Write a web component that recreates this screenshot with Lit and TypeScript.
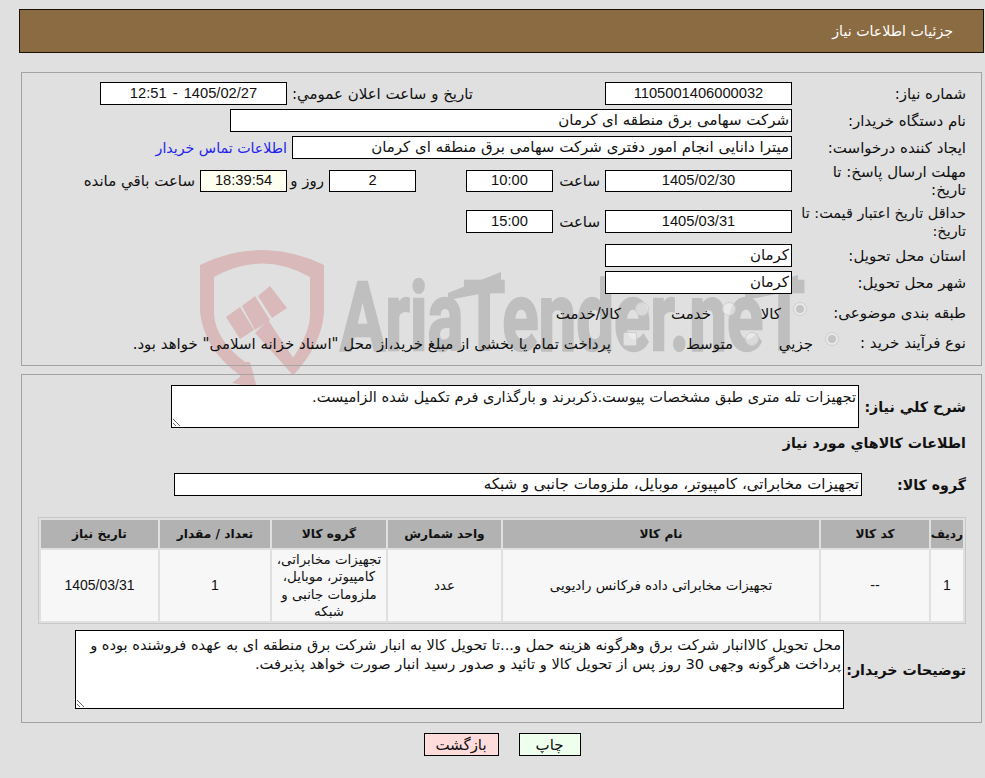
import { LitElement, html, css, svg } from "lit";
import { customElement } from "lit/decorators.js";

const watermark = svg`
<svg class="wm" width="985" height="420" viewBox="0 0 985 420" xmlns="http://www.w3.org/2000/svg">
  <g fill="#d9b9b9">
    <path d="M232 383 L241 376 Q204 350 200 312 L200 265 Q262 235 324 265 L324 312 Q322 345 293 375 L285 366 L293 358 Q310 332 310 315 L310 277 Q262 250 214 277 L214 315 Q216 340 245 362 L250 362 L257 388 Z"/>
    <polygon points="255,333 268,320 300,368 293,375"/>
    <polygon points="226,317 240,307 254,330 240,339"/>
    <polygon points="242,306 255,296 270,320 255,330"/>
    <polygon points="258,296 270,286 287,308 272,318"/>
  </g>
  <text x="340" y="350" font-family="Roboto, sans-serif" font-weight="700" font-size="97" fill="#bfbfbf" stroke="#bfbfbf" stroke-width="2.5" textLength="465" lengthAdjust="spacingAndGlyphs">AriaTender.neT</text>
  <polygon fill="#bfbfbf" points="448,293 501,272 501,290 448,300"/>
  <polygon fill="#bfbfbf" points="745,291 798,275 798,290 745,300"/>
</svg>`;

@customElement("app-root")
export class AppRoot extends LitElement {
  static styles = css`
    :host {
      display: block;
      position: relative;
      min-height: 778px;
      background: #e0e0e0;
      font-family: "DejaVu Sans", sans-serif;
      font-size: 15px;
      line-height: 18px;
      color: #111;
      overflow: hidden;
    }
    .wm { position: absolute; left: 0; top: 0; pointer-events: none; }
    .page { position: relative; padding: 9px 1px 23px 19px; box-sizing: border-box; }
    .header {
      height: 44px;
      box-sizing: border-box;
      background: #8b6b42;
      border: 1px solid #1a1208;
      color: #fff;
      display: flex;
      align-items: center;
      padding: 0 30px;
      font-size: 14.2px;
      margin-bottom: 19px;
    }
    .section {
      border: 1px solid #a3a3a3;
      margin: 0 2px 8px 2px;
      padding-right: 15px;
      box-sizing: border-box;
    }
    .s1 { height: 294px; padding-top: 9px; display: flex; flex-direction: column; }
    .s2 { height: 349px; padding-top: 10px; padding-left: 16px; margin-bottom: 10px; display: flex; flex-direction: column; }
    .row { display: flex; align-items: center; }
    .r { height: 23px; margin-bottom: 4px; }
    .r4 { height: 36px; margin-bottom: 4px; }
    .r5 { height: 37px; margin-bottom: 4px; }
    .rr { height: 27px; margin-bottom: 3px; }
    .label { width: 174px; flex: none; line-height: 18px; white-space: nowrap; }
    .small { font-size: 14.4px; }
    .lab-radio1 { width: 159px; margin-top: 2px; }
    .lab-radio2 { width: 127px; margin-top: 2px; }
    .box {
      box-sizing: border-box;
      height: 23px;
      border: 1px solid #000;
      background: #fff;
      flex: none;
      padding: 0 2px;
      white-space: nowrap;
      line-height: 20px;
      overflow: hidden;
    }
    .h22 { height: 22px; line-height: 19px; }
    .num { text-align: center; font-family: "Liberation Sans", sans-serif; font-size: 14.7px; }
    .spaced { word-spacing: 2px; }
    .w187 { width: 187px; }
    .w87 { width: 87px; }
    .warm { background: #fffff0; }
    .t1 { margin-right: 132px; width: 180px; margin-left: 6px; flex: none; white-space: nowrap; }
    .long2 { width: 562px; }
    .long3 { width: 500px; margin-left: 5px; }
    .link { color: #2222ee; white-space: nowrap; font-size: 14.2px; }
    .hour { margin: 0 5px; width: 42px; flex: none; white-space: nowrap; }
    .day { margin: 0 5px 0 9px; white-space: nowrap; width: 28px; flex: none; }
    .left { margin-right: 5px; white-space: nowrap; }
    .gap50 { margin-right: 50px; }
    .radio {
      box-sizing: border-box;
      width: 14px;
      height: 14px;
      border-radius: 50%;
      border: 1px solid #cdcdcd;
      background: rgba(240, 240, 240, 0.55);
      flex: none;
      display: flex;
      align-items: center;
      justify-content: center;
      margin-top: -5px;
    }
    .radio.on::after { content: ""; width: 8px; height: 8px; border-radius: 50%; background: #c4c4c4; }
    .check {
      box-sizing: border-box;
      width: 14px;
      height: 14px;
      border-radius: 2px;
      border: 1px solid #cdcdcd;
      background: rgba(240, 240, 240, 0.7);
      flex: none;
      margin-top: -5px;
    }
    .opt { white-space: nowrap; margin-right: 12px; flex: none; margin-top: 4px; }
    .o-a { width: 45px; }
    .o-b { width: 62px; margin-right: 11px; }
    .o-c { margin-right: 14px; }
    .o-d { width: 54px; }
    .o-e { width: 96px; }
    .bold { font-weight: 700; font-size: 14.2px; }
    textarea {
      box-sizing: border-box;
      border: 1px solid #000;
      border-radius: 0;
      background: #fff;
      font: 14.6px/18px "DejaVu Sans", sans-serif;
      color: #111;
      padding: 2px 2px 0;
      margin: 0;
      outline: none;
      display: block;
      flex: none;
    }
    .ta1 { width: 688px; height: 43px; }
    .ta2 { width: 769px; height: 79px; padding-top: 4px; line-height: 19px; }
    .heading { height: 18px; margin-top: 6px; margin-bottom: 21px; }
    .group { width: 688px; }
    table {
      width: 928px;
      table-layout: fixed;
      border: 1px solid #c8c8c8;
      border-collapse: separate;
      border-spacing: 2px;
      margin-top: 21px;
      margin-bottom: 6px;
      flex: none;
    }
    th, td { padding: 0; text-align: center; }
    th { background: #b2b2b2; height: 28px; font-weight: 700; font-size: 12.2px; white-space: nowrap; }
    td { background: #f7f7f7; height: 71px; line-height: 17.3px; font-size: 13.4px; }
    td.num { font-size: 14px; }
    td.wrap { padding: 0 3px; }
    .c1 { width: 32px; }
    .c2 { width: 108px; }
    .c3 { width: 316px; }
    .c4 { width: 113px; }
    .c5 { width: 114px; }
    .c6 { width: 110px; }
    .buttons { display: flex; justify-content: center; gap: 20px; margin-right: -19px; transform: translateX(-9px); }
    .btn { box-sizing: border-box; height: 23px; border: 1px solid #000; display: flex; align-items: center; justify-content: center; }
    .print { width: 62px; background: #eeffee; }
    .back { width: 75px; background: #ffdcdc; }
  `;

  render() {
    return html`
      ${watermark}
      <div class="page" dir="rtl">
        <div class="header">جزئيات اطلاعات نياز</div>

        <div class="section s1">
          <div class="row r">
            <div class="label">شماره نياز:</div>
            <div class="box num w187">1105001406000032</div>
            <div class="t1">تاريخ و ساعت اعلان عمومي:</div>
            <div class="box num w187 spaced">1405/02/27 - 12:51</div>
          </div>
          <div class="row r">
            <div class="label">نام دستگاه خريدار:</div>
            <div class="box long2">شرکت سهامی برق منطقه ای کرمان</div>
          </div>
          <div class="row r">
            <div class="label">ايجاد کننده درخواست:</div>
            <div class="box long3">ميترا دانايی انجام امور دفتری شرکت سهامی برق منطقه ای کرمان</div>
            <div class="link">اطلاعات تماس خريدار</div>
          </div>
          <div class="row r4">
            <div class="label">مهلت ارسال پاسخ: تا<br />تاريخ:</div>
            <div class="box num w187 h22">1405/02/30</div>
            <div class="hour">ساعت</div>
            <div class="box num w87 h22">10:00</div>
            <div class="box num w87 h22 gap50">2</div>
            <div class="day">روز و</div>
            <div class="box num w87 h22 warm">18:39:54</div>
            <div class="left">ساعت باقي مانده</div>
          </div>
          <div class="row r5">
            <div class="label small">حداقل تاريخ اعتبار قيمت: تا<br />تاريخ:</div>
            <div class="box num w187">1405/03/31</div>
            <div class="hour">ساعت</div>
            <div class="box num w87">15:00</div>
          </div>
          <div class="row r">
            <div class="label">استان محل تحويل:</div>
            <div class="box w187">کرمان</div>
          </div>
          <div class="row r">
            <div class="label">شهر محل تحويل:</div>
            <div class="box w187">کرمان</div>
          </div>
          <div class="row rr">
            <div class="label lab-radio1">طبقه بندی موضوعی:</div>
            <span class="radio on"></span>
            <span class="opt o-a">کالا</span>
            <span class="radio"></span>
            <span class="opt o-b">خدمت</span>
            <span class="radio"></span>
            <span class="opt o-c">کالا/خدمت</span>
          </div>
          <div class="row rr">
            <div class="label lab-radio2">نوع فرآيند خريد :</div>
            <span class="radio on"></span>
            <span class="opt o-d">جزيي</span>
            <span class="radio"></span>
            <span class="opt o-e">متوسط</span>
            <span class="check"></span>
            <span class="opt">پرداخت تمام يا بخشی از مبلغ خريد،از محل "اسناد خزانه اسلامی" خواهد بود.</span>
          </div>
        </div>

        <div class="section s2">
          <div class="row">
            <div class="label bold" style="width:107px">شرح كلي نياز:</div>
            <textarea class="ta1" readonly>تجهيزات تله متری طبق مشخصات پيوست.ذکربرند و بارگذاری فرم تکميل شده الزاميست.</textarea>
          </div>
          <div class="bold heading">اطلاعات كالاهاي مورد نياز</div>
          <div class="row">
            <div class="label bold" style="width:104px">گروه كالا:</div>
            <div class="box group">تجهيزات مخابراتی، کامپيوتر، موبايل، ملزومات جانبی و شبکه</div>
          </div>
          <table>
            <colgroup>
              <col class="c1" /><col class="c2" /><col class="c3" /><col class="c4" /><col class="c5" /><col class="c6" /><col />
            </colgroup>
            <thead>
              <tr>
                <th>رديف</th><th>کد كالا</th><th>نام كالا</th><th>واحد شمارش</th><th>گروه كالا</th><th>تعداد / مقدار</th><th>تاريخ نياز</th>
              </tr>
            </thead>
            <tbody>
              <tr>
                <td class="num">1</td>
                <td>--</td>
                <td>تجهيزات مخابراتی داده فرکانس راديويی</td>
                <td>عدد</td>
                <td class="wrap">تجهيزات مخابراتی، کامپيوتر، موبايل، ملزومات جانبی و شبکه</td>
                <td class="num">1</td>
                <td class="num">1405/03/31</td>
              </tr>
            </tbody>
          </table>
          <div class="row">
            <div class="label bold" style="width:122px">توضيحات خريدار:</div>
            <textarea class="ta2" readonly>محل تحويل کالاانبار شرکت برق وهرگونه هزينه حمل و...تا تحويل کالا به انبار شرکت برق منطقه ای به عهده فروشنده بوده و پرداخت هرگونه وجهی 30 روز پس از تحويل کالا و تائيد و صدور رسيد انبار صورت خواهد پذيرفت.</textarea>
          </div>
        </div>

        <div class="buttons">
          <div class="btn print">چاپ</div>
          <div class="btn back">بازگشت</div>
        </div>
      </div>
    `;
  }
}
